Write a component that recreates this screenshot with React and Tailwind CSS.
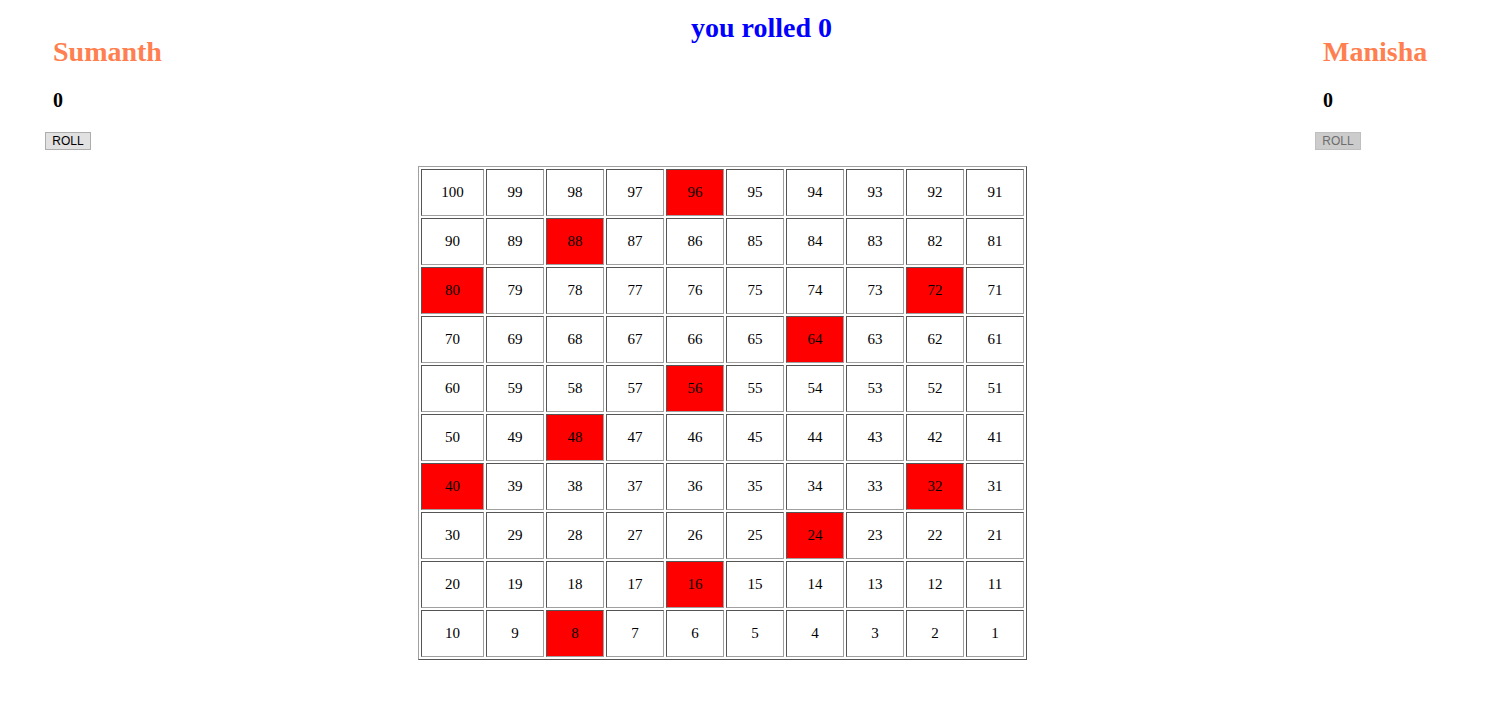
const RED = [96, 88, 80, 72, 64, 56, 48, 40, 32, 24, 16, 8];

function buildRows() {
  const rows = [];
  for (let r = 9; r >= 0; r--) {
    const row = [];
    for (let c = 10; c >= 1; c--) row.push(r * 10 + c);
    rows.push(row);
  }
  return rows;
}

function Player({ name, score, disabled }) {
  return (
    <div className="flex flex-col items-start">
      <h2 className="ml-2 mt-[36px] text-[28px] leading-[32px] font-bold text-[#ff7f50]">{name}</h2>
      <h3 className="ml-2 mt-[21px] text-[20px] leading-[23px] font-bold text-black">{score}</h3>
      <button
        disabled={disabled}
        className={`mt-[20px] h-[18px] w-[46px] border text-[12px] leading-none font-['Liberation_Sans',Arial,sans-serif] ${
          disabled ? 'bg-[#cccccc] border-[#bfbfbf] text-[#6d6d6d]' : 'bg-[#e1e1e1] border-[#adadad] text-black'
        }`}
      >
        ROLL
      </button>
    </div>
  );
}

export default function App() {
  const rows = buildRows();

  return (
    <div className="w-[1499px] min-h-[725px] bg-white font-['Liberation_Serif','Times_New_Roman',serif] text-black">
      <div className="flex items-start">
        <div className="w-[418px] shrink-0 pl-[45px]">
          <Player name="Sumanth" score={0} />
        </div>

        <div className="w-[897px] shrink-0">
          <h1 className="mt-[12px] ml-[273px] text-[28px] leading-[32px] font-bold text-[#0000ff]">you rolled 0</h1>
          <table className="mt-[122px] border-separate border-spacing-[2px] border border-t-[#a0a0a0] border-l-[#a0a0a0] border-b-[#555555] border-r-[#555555]">
            <tbody>
              {rows.map((row, i) => (
                <tr key={i}>
                  {row.map((n, j) => (
                    <td
                      key={n}
                      className={`${j === 0 ? 'w-[63px]' : 'w-[58px]'} h-[47px] p-0 text-center align-middle text-[15px] border border-t-[#555555] border-l-[#555555] border-b-[#a0a0a0] border-r-[#a0a0a0] ${
                        RED.includes(n) ? 'bg-[#ff0000]' : 'bg-white'
                      }`}
                    >
                      {n}
                    </td>
                  ))}
                </tr>
              ))}
            </tbody>
          </table>
        </div>

        <div className="shrink-0">
          <Player name="Manisha" score={0} disabled />
        </div>
      </div>
    </div>
  );
}
